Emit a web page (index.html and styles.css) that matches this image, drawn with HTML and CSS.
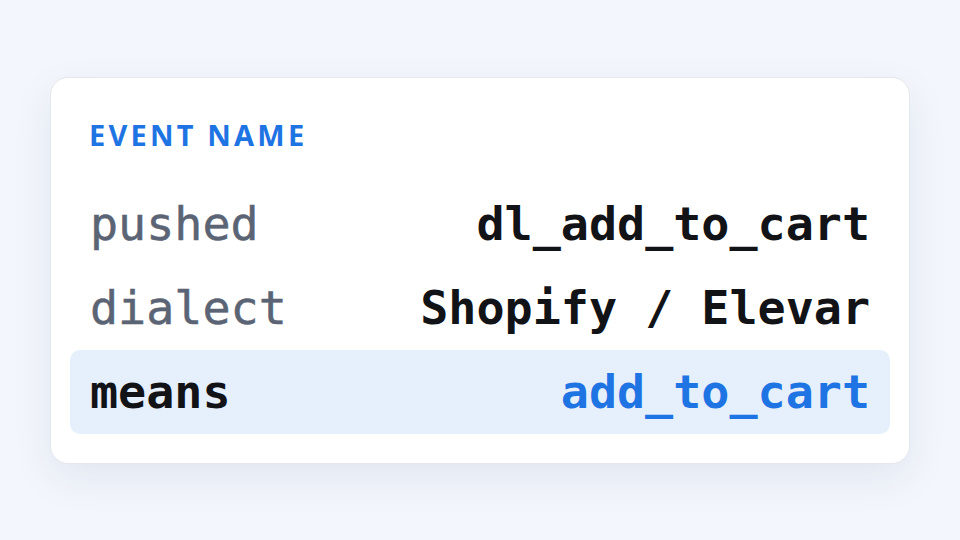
FILE: index.html
```html
<!DOCTYPE html>
<html lang="en">
<head>
<meta charset="utf-8">
<title>Event name</title>
<link rel="stylesheet" href="styles.css">
</head>
<body>
<main class="stage">
  <section class="card">
    <h2 class="card-title">EVENT NAME</h2>
    <div class="row">
      <span class="key">pushed</span>
      <span class="val">dl_add_to_cart</span>
    </div>
    <div class="row">
      <span class="key">dialect</span>
      <span class="val">Shopify / Elevar</span>
    </div>
    <div class="row row-hl">
      <span class="key">means</span>
      <span class="val">add_to_cart</span>
    </div>
  </section>
</main>
</body>
</html>
```

FILE: styles.css
```css
html, body {
  margin: 0;
  padding: 0;
}
body {
  background: #f3f6fc;
  width: 960px;
  height: 540px;
  overflow: hidden;
}
.stage {
  padding: 77px 50px 0;
}
.card {
  box-sizing: border-box;
  width: 860px;
  height: 387px;
  background: #ffffff;
  border: 1px solid #e4e7ec;
  border-radius: 18px;
  box-shadow: 0 14px 40px rgba(30, 50, 90, 0.08);
  padding: 38px 19px 29px;
}
.card-title {
  margin: 0 19px 28px;
  font-family: "Noto Sans", "Open Sans", sans-serif;
  font-weight: 700;
  font-size: 29px;
  line-height: 38px;
  letter-spacing: 0.11em;
  color: #1f74e3;
}
.row {
  display: flex;
  justify-content: space-between;
  align-items: center;
  height: 84px;
  padding: 0 20px;
  border-radius: 10px;
  font-family: "DejaVu Sans Mono", monospace;
  font-size: 46.7px;
  line-height: 84px;
}
.key {
  color: #5b6474;
  -webkit-text-stroke: 0.5px #5b6474;
}
.val {
  color: #111317;
  font-weight: 700;
}
.row-hl {
  background: #e6f0fc;
}
.row-hl .key {
  color: #111317;
  font-weight: 700;
  -webkit-text-stroke: 0;
}
.row-hl .val {
  color: #1f74e3;
}
```
